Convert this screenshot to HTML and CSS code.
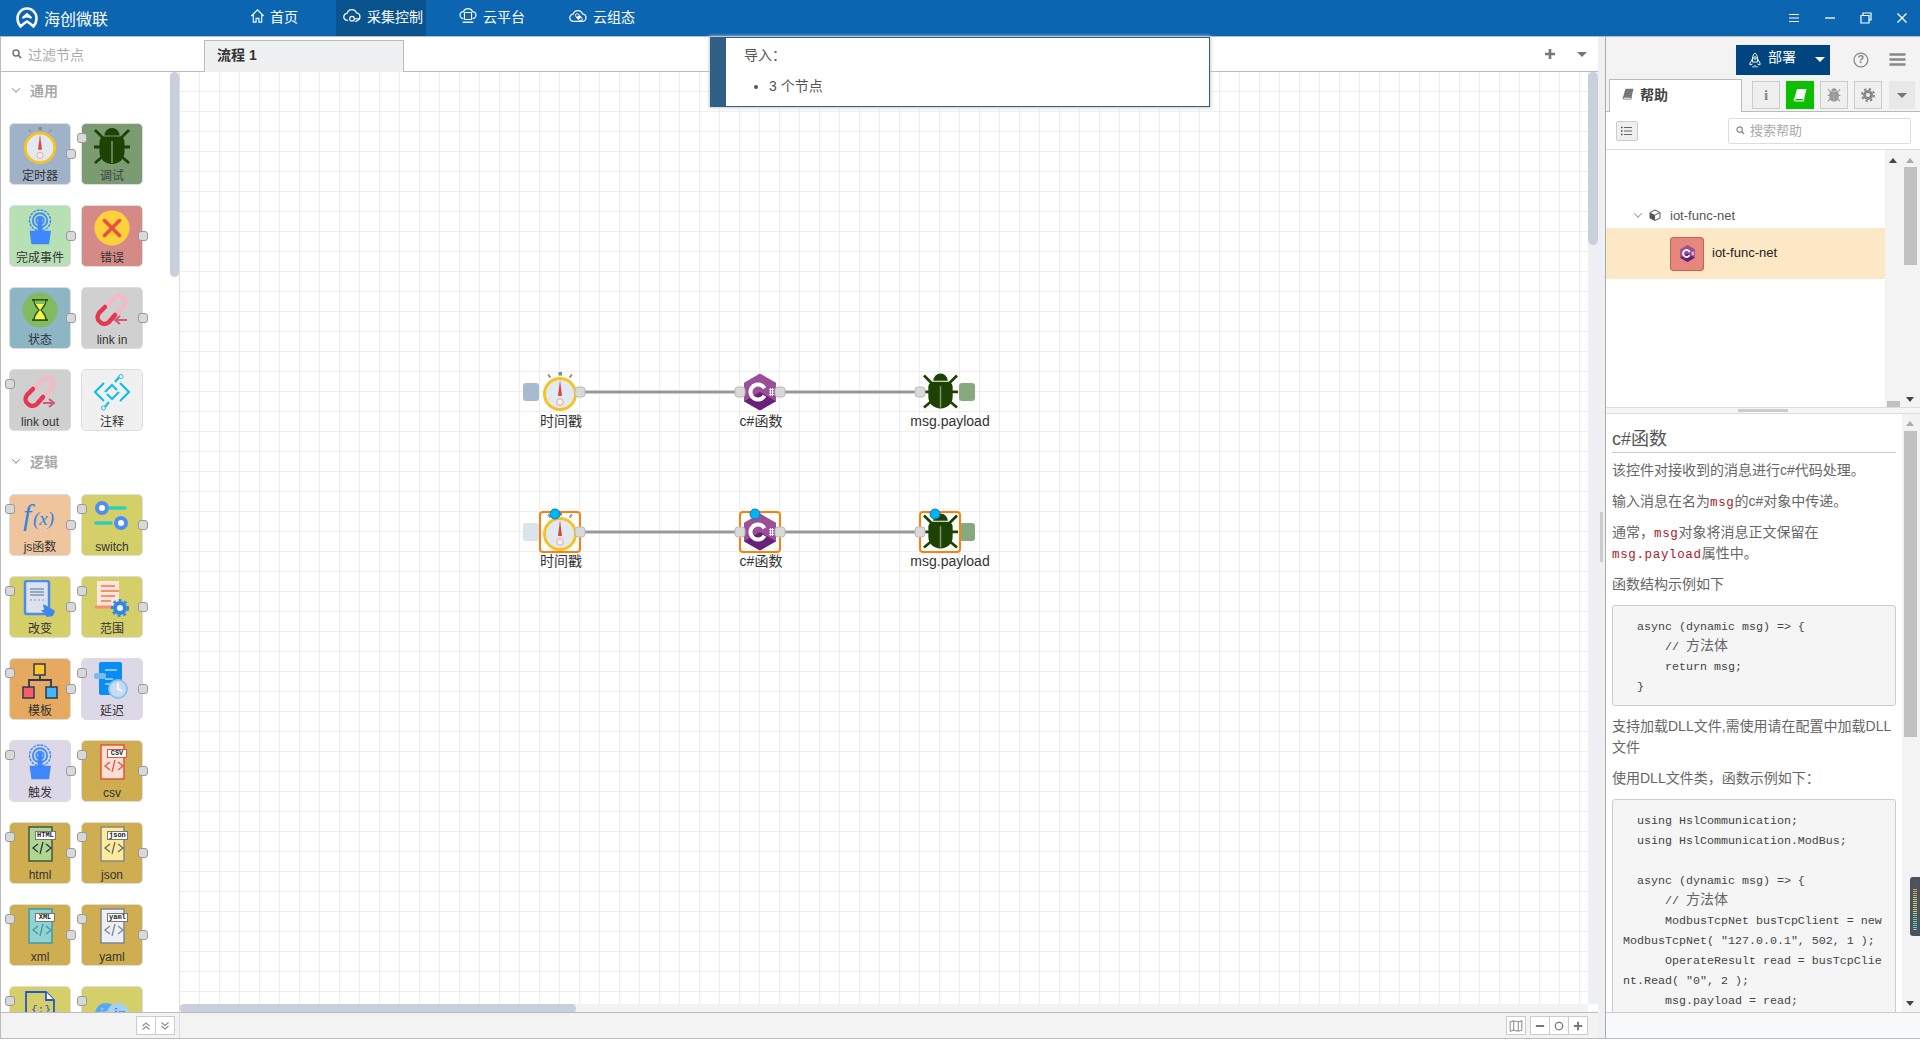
FILE: index.html
```html
<!DOCTYPE html>
<html lang="zh-CN">
<head>
<meta charset="utf-8">
<title>海创微联</title>
<link rel="stylesheet" href="styles.css">
</head>
<body>
<svg class="sprite" xmlns="http://www.w3.org/2000/svg">
  <symbol id="i-clock" viewBox="0 0 36 40">
    <rect x="16.5" y="0" width="3.5" height="3.5" fill="#888"/>
    <path d="M6 2.500l2.500 3M30 2.500l-2.500 3" stroke="#999" stroke-width="2"/>
    <circle cx="18" cy="22" r="15.500" fill="#e3e9f0" stroke="#f5c326" stroke-width="3"/>
    <path d="M18 8l2 16h-4z" fill="#d9433c"/>
    <circle cx="18" cy="30" r="3.300" fill="#f8eeee" stroke="#eea3a3" stroke-width="1"/>
  </symbol>
  <symbol id="i-bug" viewBox="0 0 36 38">
    <path d="M10.500 8.500a7.500 7.500 0 0 1 15 0z" fill="var(--b, #1d4203)"/>
    <path d="M5.500 15c0-3.500 2.500-5.500 5.500-5.500h14c3 0 5.500 2 5.500 5.500v10c0 7-5.500 12-12.500 12S5.500 32 5.500 25z" fill="var(--b, #1d4203)"/>
    <path d="M1 3l8 8M35 3l-8 8M0 20h8M36 20h-8M1 36l7-6M35 36l-7-6" stroke="var(--b, #1d4203)" stroke-width="2.800" fill="none"/>
    <path d="M18 14v22" stroke="#fff" stroke-opacity=".45" stroke-width="1.500"/>
  </symbol>
  <symbol id="i-touch" viewBox="0 0 36 40">
    <circle cx="18" cy="12" r="11" fill="none" stroke="#3f8cf2" stroke-width="1.500" stroke-dasharray="3 1"/>
    <circle cx="18" cy="12" r="7.500" fill="none" stroke="#3f8cf2" stroke-width="2"/>
    <circle cx="18" cy="12" r="4" fill="none" stroke="#3f8cf2" stroke-width="2"/>
    <path d="M15.500 11a2.500 2.500 0 0 1 5 0v12h9l-2 14H9L7 23h8.500z" fill="#3f86fb"/>
  </symbol>
  <symbol id="i-error" viewBox="0 0 36 38">
    <circle cx="18" cy="19" r="17.500" fill="#fdd13c"/>
    <path d="M10.500 11.500l15 15M25.500 11.500l-15 15" stroke="#f04b3e" stroke-width="3.500" stroke-linecap="round"/>
  </symbol>
  <symbol id="i-status" viewBox="0 0 36 36">
    <circle cx="18" cy="18" r="17.500" fill="#82bb5d"/>
    <path d="M10 8h16M10 28h16" stroke="#2d5a22" stroke-width="2"/>
    <path d="M12 8c0 6 4 8 5 10-1 2-5 4-5 10h12c0-6-4-8-5-10 1-2 5-4 5-10z" fill="#f7f74a" stroke="#2d5a22" stroke-width="1.500"/>
    <path d="M12.500 9h11l-1 3H13.500z" fill="#82bb5d"/>
  </symbol>
  <symbol id="i-linkin" viewBox="0 0 36 36">
    <path d="M14 13l6-7c3-3 8-3 10 0 2 2 2 6 0 8l-6 6" fill="none" stroke="#f6b9c4" stroke-width="4.500" stroke-linecap="round"/>
    <path d="M11 15l-6 6c-2 3-2 7 1 9 3 3 7 2 9 0l6-7" fill="none" stroke="#e63752" stroke-width="4.500" stroke-linecap="round"/>
    <path d="M22 28h11M26 24l-5 4 5 4" fill="none" stroke="#cc5a78" stroke-width="2"/>
  </symbol>
  <symbol id="i-linkout" viewBox="0 0 36 36">
    <path d="M14 13l6-7c3-3 8-3 10 0 2 2 2 6 0 8l-6 6" fill="none" stroke="#f6b9c4" stroke-width="4.500" stroke-linecap="round"/>
    <path d="M11 15l-6 6c-2 3-2 7 1 9 3 3 7 2 9 0l6-7" fill="none" stroke="#e63752" stroke-width="4.500" stroke-linecap="round"/>
    <path d="M21 29h10M27 25l5 4-5 4" fill="none" stroke="#cc5a78" stroke-width="2"/>
  </symbol>
  <symbol id="i-comment" viewBox="0 0 36 36">
    <path d="M10 9l-9 9 9 9M26 9l9 9-9 9M11 18l7-7 5 5M25 18l-7 7-5-5M21 8l5-6M15 28l-5 6" fill="none" stroke="#13bfe0" stroke-width="2.200"/>
    <circle cx="27" cy="2.500" r="2" fill="#fff" stroke="#13bfe0"/><circle cx="9.500" cy="34" r="2" fill="#fff" stroke="#13bfe0"/>
  </symbol>
  <symbol id="i-switch" viewBox="0 0 36 36">
    <circle cx="8" cy="9" r="5" fill="#fff" stroke="#4d8ff2" stroke-width="4"/>
    <path d="M16 9h15M2 24h15" stroke="#2fcfb5" stroke-width="3.500" stroke-linecap="round"/>
    <circle cx="27" cy="24" r="5" fill="#fff" stroke="#4d8ff2" stroke-width="4"/>
  </symbol>
  <symbol id="i-change" viewBox="0 0 36 38">
    <rect x="3" y="1" width="24" height="33" rx="2" fill="#dce3ec" stroke="#4d8bf0" stroke-width="2.500"/>
    <path d="M8 9h14M8 12h14M8 15h14" stroke="#7d96b5" stroke-width="1.500"/>
    <path d="M8 20h14" stroke="#7d96b5" stroke-dasharray="2 2"/>
    <path d="M21 24l6 3 6 4-2 5-6 1-6-7 3 0z" fill="#3f86f0"/>
  </symbol>
  <symbol id="i-range" viewBox="0 0 36 38">
    <path d="M3 1h22v26H3z" fill="#fde6da"/>
    <path d="M7 6h14M7 11h18M7 16h14M7 21h10" stroke="#f88f70" stroke-width="2"/>
    <path d="M1 27h20" stroke="#f88f70" stroke-width="3"/>
    <circle cx="26" cy="28" r="5" fill="#fff" stroke="#2f87e8" stroke-width="4"/>
    <circle cx="26" cy="28" r="8" fill="none" stroke="#2f87e8" stroke-width="2" stroke-dasharray="3 3"/>
  </symbol>
  <symbol id="i-template" viewBox="0 0 36 36">
    <rect x="12" y="1" width="11" height="11" fill="#fcc72c" stroke="#2d3a55" stroke-width="1.500"/>
    <path d="M18 12v5M7 24v-7h22v7" fill="none" stroke="#2d3a55" stroke-width="1.800"/>
    <rect x="1" y="24" width="11" height="11" fill="#fb5d68" stroke="#2d3a55" stroke-width="1.500"/>
    <rect x="24" y="24" width="11" height="11" fill="#42b5fb" stroke="#2d3a55" stroke-width="1.500"/>
  </symbol>
  <symbol id="i-delay" viewBox="0 0 36 38">
    <rect x="5" y="0" width="23" height="33" rx="2" fill="#0a8cf5"/>
    <path d="M11 8h12M11 17h8M11 22h5" stroke="#fff" stroke-width="1"/>
    <rect x="0" y="11" width="12" height="6" rx="2" fill="#79b9f2"/>
    <circle cx="24" cy="27" r="9" fill="#c5dcf3" stroke="#8ec0ec" stroke-width="2"/>
    <path d="M24 21v6l4 2" fill="none" stroke="#fff" stroke-width="1.500"/>
  </symbol>
  <symbol id="i-file" viewBox="0 0 30 36">
    <path d="M2 1h23v34H2z" fill="var(--f)" stroke="var(--s)" stroke-width="1.500"/>
    <path d="M11 18l-5 4 5 4M19 18l5 4-5 4M16 16l-3 12" fill="none" stroke="var(--c)" stroke-width="1.300"/>
  </symbol>
  <symbol id="i-csharp" viewBox="0 0 32 37">
    <path d="M16 0l16 9.250v18.500L16 37 0 27.750V9.250z" fill="#9b4f96"/>
    <path d="M0 27.750L16 18.500l16 9.250L16 37z" fill="#68217a"/>
    <circle cx="14" cy="18.500" r="7.500" fill="none" stroke="#fff" stroke-width="4" stroke-dasharray="39 8.100" transform="rotate(30 14 18.500)"/>
    <path d="M25 16h5M25 18.500h5M25 21h5M26.500 14.500v8M28.500 14.500v8" stroke="#fff" stroke-width=".9"/>
  </symbol>
  <symbol id="i-cloud" viewBox="0 0 20 18">
    <path d="M5 14a4 4 0 0 1-.5-8A5.500 5.500 0 0 1 15 5.500 4.300 4.300 0 0 1 15.500 14" fill="none" stroke="#fff" stroke-width="1.400" stroke-linecap="round"/>
    <circle cx="10" cy="12" r="2.600" fill="none" stroke="#fff" stroke-width="1.200"/>
    <path d="M13 12h5M13 15h3" stroke="#fff" stroke-width="1.200"/>
  </symbol>
  <symbol id="i-book" viewBox="0 0 14 14">
    <path d="M4 1h9.500l-2.500 10H3L1.500 12.500 1 11.500z" fill="currentColor"/>
    <path d="M1 12c0-1.500 1-1.500 2-1.500h8L10.500 13H3c-1 0-2-.200-2-1z" fill="none" stroke="currentColor"/>
  </symbol>
</svg>

<div class="app">
  <header class="top">
    <div class="brand">
      <svg class="logo" viewBox="0 0 22 22"><path d="M11 1.500a9.500 9.500 0 0 1 9.500 9.500c0 3-1.300 6.500-3 8.500l-3.500-3-3-2-3 2-3.500 3c-1.700-2-3-5.500-3-8.500A9.500 9.500 0 0 1 11 1.500z" fill="none" stroke="#fff" stroke-width="2.500"/><path d="M6.500 11L11 7l4.500 4-4.500-1.500z" fill="none" stroke="#fff" stroke-width="1.800"/></svg>
      <span>海创微联</span>
    </div>
    <nav class="nav">
      <a class="nav-item nav-home"><svg class="nav-ic" viewBox="0 0 16 16"><path d="M1.500 8L8 1.500 14.500 8M3.500 7v7.500h3v-4h3v4h3V7" fill="none" stroke="#fff" stroke-width="1.200"/></svg>首页</a>
      <a class="nav-item nav-active"><svg class="nav-ic-w"><use href="#i-cloud"/></svg>采集控制</a>
      <a class="nav-item nav-cloud"><svg class="nav-ic-w" viewBox="0 0 20 18"><path d="M5 12a4 4 0 0 1 0-8 5.500 5.500 0 0 1 10 0 4 4 0 0 1 0 8" fill="none" stroke="#fff" stroke-width="1.400"/><rect x="6" y="5" width="8" height="8" rx="1" fill="none" stroke="#fff" stroke-width="1.200"/><path d="M4 16h12" stroke="#fff" stroke-width="1.500"/></svg>云平台</a>
      <a class="nav-item nav-scada"><svg class="nav-ic-w" viewBox="0 0 20 18"><path d="M5 15a4 4 0 0 1-.5-8A5.500 5.500 0 0 1 15 6.500 4.300 4.300 0 0 1 15.500 15z" fill="none" stroke="#fff" stroke-width="1.400"/><circle cx="11" cy="10.500" r="2" fill="#fff"/><ellipse cx="11" cy="10.500" rx="5" ry="2.200" fill="none" stroke="#fff" transform="rotate(50 11 10.500)"/></svg>云组态</a>
    </nav>
    <div class="winctl">
      <svg class="win" viewBox="0 0 12 12"><path d="M1 2.500h10M1 6h10M1 9.500h10" stroke="#fff" stroke-width="1.100"/></svg>
      <svg class="win" viewBox="0 0 12 12"><path d="M1 6h10" stroke="#fff" stroke-width="1.300"/></svg>
      <svg class="win" viewBox="0 0 12 12"><path d="M1 3.500h8v7.500H1zM3 3.500V1h8v7H9" fill="none" stroke="#fff" stroke-width="1.200"/></svg>
      <svg class="win" viewBox="0 0 12 12"><path d="M1.500 1.500l9 9M10.500 1.500l-9 9" stroke="#fff" stroke-width="1.300"/></svg>
    </div>
  </header>

  <main class="work">
    <aside class="palette">
      <div class="filter">
        <svg class="mag mag-f" viewBox="0 0 10 10"><circle cx="4" cy="4" r="3" fill="none" stroke="#777" stroke-width="1.500"/><path d="M6.200 6.200L9 9" stroke="#777" stroke-width="1.800"/></svg>
        <span>过滤节点</span>
      </div>
      <div class="plist">
        <div class="pthumb"></div>
        <div class="psec"><span class="chev"></span>通用</div>
        <div class="pgrid pgrid-first">
          <div class="pn c-timer"><svg class="pi"><use href="#i-clock"/></svg><b>定时器</b><i class="po"></i></div>
          <div class="pn c-debug"><i class="pin"></i><svg class="pi"><use href="#i-bug"/></svg><b>调试</b></div>
          <div class="pn c-done"><svg class="pi"><use href="#i-touch"/></svg><b>完成事件</b><i class="po"></i></div>
          <div class="pn c-error"><svg class="pi"><use href="#i-error"/></svg><b>错误</b><i class="po"></i></div>
          <div class="pn c-status"><svg class="pi"><use href="#i-status"/></svg><b>状态</b><i class="po"></i></div>
          <div class="pn c-link"><svg class="pi"><use href="#i-linkin"/></svg><b>link in</b><i class="po"></i></div>
          <div class="pn c-link"><i class="pin"></i><svg class="pi"><use href="#i-linkout"/></svg><b>link out</b></div>
          <div class="pn c-note"><svg class="pi"><use href="#i-comment"/></svg><b>注释</b></div>
        </div>
        <div class="psec psec-2"><span class="chev"></span>逻辑</div>
        <div class="pgrid pgrid-second">
          <div class="pn c-js"><i class="pin"></i><svg class="pi" viewBox="0 0 36 36"><text x="1" y="26" class="fx-a">f</text><text x="11" y="26" class="fx-b">(x)</text></svg><b>js函数</b><i class="po"></i></div>
          <div class="pn c-olive"><i class="pin"></i><svg class="pi"><use href="#i-switch"/></svg><b>switch</b><i class="po"></i></div>
          <div class="pn c-olive"><i class="pin"></i><svg class="pi"><use href="#i-change"/></svg><b>改变</b><i class="po"></i></div>
          <div class="pn c-olive"><i class="pin"></i><svg class="pi"><use href="#i-range"/></svg><b>范围</b><i class="po"></i></div>
          <div class="pn c-orange"><i class="pin"></i><svg class="pi"><use href="#i-template"/></svg><b>模板</b><i class="po"></i></div>
          <div class="pn c-lilac"><i class="pin"></i><svg class="pi"><use href="#i-delay"/></svg><b>延迟</b><i class="po"></i></div>
          <div class="pn c-lilac"><i class="pin"></i><svg class="pi"><use href="#i-touch"/></svg><b>触发</b><i class="po"></i></div>
          <div class="pn c-gold"><i class="pin"></i><div class="fi f-csv"><svg class="fsvg"><use href="#i-file"/></svg><em>CSV</em></div><b>csv</b><i class="po"></i></div>
          <div class="pn c-gold"><i class="pin"></i><div class="fi f-html"><svg class="fsvg"><use href="#i-file"/></svg><em>HTML</em></div><b>html</b><i class="po"></i></div>
          <div class="pn c-gold"><i class="pin"></i><div class="fi f-json"><svg class="fsvg"><use href="#i-file"/></svg><em>json</em></div><b>json</b><i class="po"></i></div>
          <div class="pn c-gold"><i class="pin"></i><div class="fi f-xml"><svg class="fsvg"><use href="#i-file"/></svg><em>XML</em></div><b>xml</b><i class="po"></i></div>
          <div class="pn c-gold"><i class="pin"></i><div class="fi f-yaml"><svg class="fsvg"><use href="#i-file"/></svg><em>yaml</em></div><b>yaml</b><i class="po"></i></div>
          <div class="pn c-olive"><i class="pin"></i><svg class="pi" viewBox="0 0 36 36"><path d="M4 1h20l8 8v28H4z" fill="none" stroke="#2357cf" stroke-width="1.800"/><path d="M24 1v8h8" fill="#fff" stroke="#2357cf" stroke-width="1.800"/><text x="9" y="22" class="fx-c">{;}</text></svg></div>
          <div class="pn c-olive"><i class="pin"></i><svg class="pi pi-low" viewBox="0 0 36 36"><circle cx="12" cy="18" r="11" fill="#5ba8f0"/><circle cx="24" cy="18" r="11" fill="#a8d0f5"/><text x="6" y="23" class="fx-d">in</text><text x="20" y="23" class="fx-e">in</text></svg></div>
        </div>
      </div>
      <div class="pfoot">
        <span class="fbtn"><svg viewBox="0 0 10 10"><path d="M1.500 5L5 2l3.500 3M1.500 8.500L5 5.500l3.500 3" fill="none" stroke="#8a8f98" stroke-width="1.200"/></svg></span><span class="fbtn"><svg viewBox="0 0 10 10"><path d="M1.500 1.500L5 4.500l3.500-3M1.500 5L5 8l3.500-3" fill="none" stroke="#8a8f98" stroke-width="1.200"/></svg></span>
      </div>
    </aside>

    <section class="center">
      <div class="tabs">
        <div class="tab">流程 1</div>
        <div class="tabs-ctl">
          <svg class="plus" viewBox="0 0 12 12"><path d="M6 1v10M1 6h10" stroke="#777" stroke-width="2.600"/></svg>
          <span class="caret caret-g"></span>
        </div>
      </div>
      <div class="canvas">
        <div class="ws">
          <svg class="flow" viewBox="180 72 1408 932" xmlns="http://www.w3.org/2000/svg">
            <path class="wire" d="M580 392H740M780 392H920M580 532H740M780 532H920"/>
            <rect x="523" y="383" width="16" height="18" rx="3" fill="#a6bbcf"/>
            <rect x="523" y="523" width="16" height="18" rx="3" fill="#dbe4ec"/>
            <rect x="959" y="383" width="16" height="18" rx="3" fill="#87a980"/>
            <rect x="959" y="523" width="16" height="18" rx="3" fill="#87a980"/>
            <use href="#i-clock" x="542" y="372" width="36" height="40"/>
            <use href="#i-clock" x="542" y="512" width="36" height="40"/>
            <use href="#i-csharp" x="744" y="373.500" width="32" height="37"/>
            <use href="#i-csharp" x="744" y="513.500" width="32" height="37"/>
            <use href="#i-bug" x="923" y="372" width="35" height="38"/>
            <use href="#i-bug" x="923" y="512" width="35" height="38"/>
            <rect class="sel" x="540" y="512" width="40" height="40" rx="3"/>
            <rect class="sel" x="740" y="512" width="40" height="40" rx="3"/>
            <rect class="sel" x="920" y="512" width="40" height="40" rx="3"/>
            <rect class="port" x="575" y="387" width="10" height="10" rx="3"/>
            <rect class="port" x="735" y="387" width="10" height="10" rx="3"/>
            <rect class="port" x="775" y="387" width="10" height="10" rx="3"/>
            <rect class="port" x="915" y="387" width="10" height="10" rx="3"/>
            <rect class="port" x="575" y="527" width="10" height="10" rx="3"/>
            <rect class="port" x="735" y="527" width="10" height="10" rx="3"/>
            <rect class="port" x="775" y="527" width="10" height="10" rx="3"/>
            <rect class="port" x="915" y="527" width="10" height="10" rx="3"/>
            <circle class="dot" cx="555" cy="514" r="5"/>
            <circle class="dot" cx="755" cy="514" r="5"/>
            <circle class="dot" cx="935" cy="514" r="5"/>
            <text class="nl" x="561" y="426">时间戳</text>
            <text class="nl" x="761" y="426">c#函数</text>
            <text class="nl" x="950" y="426">msg.payload</text>
            <text class="nl" x="561" y="566">时间戳</text>
            <text class="nl" x="761" y="566">c#函数</text>
            <text class="nl" x="950" y="566">msg.payload</text>
          </svg>
        </div>
        <div class="vtrack"><div class="vthumb"></div></div>
        <div class="htrack"><div class="hthumb"></div></div>
        <div class="corner"></div>
      </div>
      <div class="cfoot">
        <span class="fbtn cf-map"><svg viewBox="0 0 12 12"><path d="M1 2.500l3-1 4 1 3-1v8l-3 1-4-1-3 1zM4 1.500v8M8 2.500v8" fill="none" stroke="#999" stroke-width="1"/></svg></span>
        <span class="cf-group">
          <span class="fbtn"><svg viewBox="0 0 12 12"><path d="M1 6h10" stroke="#777" stroke-width="2.400"/></svg></span><span class="fbtn"><svg viewBox="0 0 12 12"><circle cx="6" cy="6" r="4.500" fill="none" stroke="#777" stroke-width="1.500"/></svg></span><span class="fbtn"><svg viewBox="0 0 12 12"><path d="M6 1v10M1 6h10" stroke="#777" stroke-width="2.400"/></svg></span>
        </span>
      </div>
    </section>

    <div class="sep"><div class="sep-handle"></div></div>

    <aside class="side">
      <div class="deploybar">
        <div class="deploy">
          <svg class="rocket" viewBox="0 0 16 16"><path d="M8 1c2.500 2 3 5 2.500 9h-5C5 6 5.500 3 8 1zM5.500 7L3 11v2l2.500-1M10.500 7L13 11v2l-2.500-1M6 14v1.500M8 13v2.500M10 14v1.500" fill="none" stroke="#fff" stroke-width="1"/><circle cx="8" cy="6" r="1.300" fill="none" stroke="#fff"/></svg>
          <span class="deploy-t">部署</span>
          <span class="caret caret-w"></span>
        </div>
        <svg class="help" viewBox="0 0 16 16"><circle cx="8" cy="8" r="7" fill="none" stroke="#888" stroke-width="1.300"/><text x="8" y="11.500" class="qm">?</text></svg>
        <svg class="ham" viewBox="0 0 16 13"><path d="M0 1.500h16M0 6.500h16M0 11.500h16" stroke="#888" stroke-width="2.400"/></svg>
      </div>
      <div class="sidetabs">
        <div class="stab"><svg class="bk"><use href="#i-book"/></svg>帮助</div>
        <div class="sbtns">
          <span class="sb sb-i">i</span>
          <span class="sb sb-on"><svg class="bk"><use href="#i-book"/></svg></span>
          <span class="sb"><svg class="sb-ic sb-bug" viewBox="0 0 36 38"><use href="#i-bug"/></svg></span>
          <span class="sb"><svg class="sb-ic" viewBox="0 0 14 14"><circle cx="7" cy="7" r="3.500" fill="none" stroke="#888" stroke-width="3"/><circle cx="7" cy="7" r="6" fill="none" stroke="#888" stroke-width="2" stroke-dasharray="2.400 2.300"/></svg></span>
          <span class="sb sb-plain"><span class="caret caret-g"></span></span>
        </div>
      </div>
      <div class="stool">
        <span class="listbtn"><svg viewBox="0 0 12 10"><path d="M3 1.500h8M3 5h8M3 8.500h8" stroke="#666" stroke-width="1"/><path d="M0 1.500h1.500M0 5h1.500M0 8.500h1.500" stroke="#444" stroke-width="1.400"/></svg></span>
        <div class="hsearch">
          <svg class="mag" viewBox="0 0 10 10"><circle cx="4" cy="4" r="3" fill="none" stroke="#888" stroke-width="1.300"/><path d="M6.200 6.200L9 9" stroke="#888" stroke-width="1.600"/></svg>
          <span class="hsearch-t">搜索帮助</span>
        </div>
      </div>
      <div class="tree">
        <div class="tree-body">
          <div class="t-mod"><span class="chev chev-d"></span><svg class="cube" viewBox="0 0 12 12"><path d="M6 1l5 2.500v5.500L6 11.500 1 9V3.500z" fill="#fff" stroke="#555"/><path d="M1 3.500L6 6v5.500L1 9z" fill="#555"/><path d="M6 6l5-2.500" stroke="#555"/></svg>iot-func-net</div>
          <div class="t-node"><span class="t-ic"><svg class="t-cs"><use href="#i-csharp"/></svg></span><span class="t-label">iot-func-net</span></div>
        </div>
        <div class="tree-scroll">
          <span class="tri tri-up tri-d tri-a"></span><span class="tri tri-up tri-b"></span>
          <div class="ts-thumb"></div>
          <span class="tri tri-dn tri-d tri-c"></span>
          <div class="ts-thumb2"></div>
        </div>
      </div>
      <div class="divider"><div class="div-handle"></div></div>
      <div class="help-wrap">
        <article class="doc">
          <h3>c#函数</h3>
          <p>该控件对接收到的消息进行c#代码处理。</p>
          <p>输入消息在名为<code>msg</code>的c#对象中传递。</p>
          <p>通常，<code>msg</code>对象将消息正文保留在<br><code>msg.payload</code>属性中。</p>
          <p>函数结构示例如下</p>
          <pre class="pre-a"><span class="ln">  async (dynamic msg) =&gt; {</span><span class="ln"><span>      // </span><span class="cj">方法体</span></span><span class="ln">      return msg;</span><span class="ln">  }</span></pre>
          <p>支持加载DLL文件,需使用请在配置中加载DLL<br>文件</p>
          <p>使用DLL文件类，函数示例如下：</p>
          <pre class="pre-b"><span class="ln">  using HslCommunication;</span><span class="ln">  using HslCommunication.ModBus;</span><span class="ln"></span><span class="ln">  async (dynamic msg) =&gt; {</span><span class="ln"><span>      // </span><span class="cj">方法体</span></span><span class="ln">      ModbusTcpNet busTcpClient = new</span><span class="ln">ModbusTcpNet( "127.0.0.1", 502, 1 );</span><span class="ln">      OperateResult read = busTcpClie</span><span class="ln">nt.Read( "0", 2 );</span><span class="ln">      msg.payload = read;</span></pre>
        </article>
        <div class="doc-scroll">
          <span class="tri tri-up tri-b"></span>
          <div class="ds-thumb"></div>
          <span class="tri tri-dn tri-d"></span>
        </div>
        <div class="meter"><span></span></div>
      </div>
      <div class="sfoot"></div>
    </aside>
  </main>

  <div class="notify">
    <div class="notify-bar"></div>
    <div class="notify-body">
      <div class="notify-t">导入：</div>
      <ul><li>3 个节点</li></ul>
    </div>
  </div>
</div>
</body>
</html>
```

FILE: styles.css
```css
* { box-sizing: border-box; }
html, body { margin: 0; padding: 0; width: 1920px; height: 1040px; overflow: hidden; }
body { font-family: "Liberation Sans", "Noto Sans CJK SC", sans-serif; font-size: 14px; color: #555; background: #fff; }
.sprite { position: absolute; width: 0; height: 0; }
.app { position: relative; width: 1920px; height: 1040px; display: flex; flex-direction: column; }

/* header */
.top { height: 37px; flex: none; background: #0b65b0; border-bottom: 1px solid #bbb; display: flex; align-items: stretch; color: #fff; }
.brand { width: 250px; display: flex; align-items: center; gap: 6px; padding-left: 16px; font-size: 16px; flex: none; }
.logo { width: 22px; height: 22px; }
.nav { display: flex; flex: 1; }
.nav-item { display: flex; align-items: center; gap: 6px; height: 36px; padding-bottom: 4px; font-size: 14px; color: #fff; }
.nav-home { width: 86px; gap: 5px; }
.nav-active { width: 90px; background: #09538f; padding-left: 7px; }
.nav-cloud { margin-left: 33px; width: 110px; gap: 6px; }
.nav-scada { gap: 6px; }
.nav-ic { width: 15px; height: 16px; }
.nav-ic-w { width: 18px; height: 16px; }
.winctl { display: flex; gap: 24px; padding-right: 12px; align-items: center; }
.win { width: 12px; height: 12px; }

/* main */
.work { flex: none; height: 1002px; display: flex; border-bottom: 1px solid #bbb; border-left: 1px solid #bbb; }
.palette { width: 179px; flex: none; display: flex; flex-direction: column; }
.filter { height: 35px; flex: none; border-bottom: 1px solid #bbb; display: flex; align-items: center; gap: 6px; padding-left: 11px; color: #aaa; font-size: 14px; background: #fff; }
.mag { width: 9px; height: 9px; flex: none; }
.mag-f { width: 10px; height: 10px; }
.plist { flex: 1; position: relative; overflow: hidden; min-height: 0; border-right: 1px solid #ddd; }
.pthumb { position: absolute; right: 0; top: 0; width: 9px; height: 205px; border-radius: 5px; background: #c9cfdd; }
.psec { height: 36px; display: flex; align-items: center; gap: 11px; padding-left: 12px; color: #aaa; font-size: 14px; font-weight: 700; }
.psec-2 { margin-top: 20px; height: 20px; }
.chev { width: 6px; height: 6px; border-right: 1px solid #999; border-bottom: 1px solid #999; transform: rotate(45deg) translate(-1px, -1px); flex: none; }
.pgrid { display: grid; grid-template-columns: 62px 62px; grid-auto-rows: 62px; column-gap: 10px; row-gap: 20px; padding-left: 8px; }
.pgrid-first { margin-top: 15px; }
.pgrid-second { margin-top: 23px; }
.pn { position: relative; display: flex; flex-direction: column; align-items: center; border: 1px solid #ddd; border-radius: 5px; padding-top: 3px; }
.pn b { font-weight: 400; font-size: 12px; line-height: 16px; color: #333; position: absolute; top: 44px; left: 0; right: 0; text-align: center; white-space: nowrap; }
.pi { width: 36px; height: 38px; flex: none; }
.pi-low { margin-top: 5px; }
.pin, .po { position: absolute; width: 10px; height: 10px; border: 1px solid #999; border-radius: 3px; background: #d9d9d9; }
.pin { left: -5px; top: 9px; }
.po { right: -6px; top: 25px; }
.c-timer { background: #a0b2c8; }
.c-debug { background: #7b9b73; }
.c-debug b { color: #444; }
.c-done { background: #b8e0b5; }
.c-error { background: #d68a87; }
.c-status { background: #8db6c5; }
.c-link { background: #d0d0d0; }
.c-note { background: #f0f0f0; }
.c-js { background: #eec59c; }
.c-olive { background: #d5cf6a; }
.c-orange { background: #e5aa60; }
.c-lilac { background: #dcd8e8; }
.c-gold { background: #cfae52; }
.fx-a { font-family: "Liberation Serif", serif; font-style: italic; font-size: 30px; fill: #2f85e8; }
.fx-b { font-family: "Liberation Serif", serif; font-style: italic; font-size: 19px; fill: #2f85e8; }
.fx-c { font-family: "Liberation Mono", monospace; font-size: 11px; fill: #2357cf; }
.fx-d { font-size: 14px; font-weight: 700; fill: #a8d0f5; }
.fx-e { font-size: 14px; font-weight: 700; fill: #3f86f0; }
.fi { position: relative; width: 36px; height: 36px; flex: none; --f: #fff; --s: #444; --c: #444; }
.fsvg { position: absolute; left: 5px; top: 0; width: 30px; height: 36px; }
.fi em { position: absolute; left: 13px; top: 5px; height: 9px; min-width: 20px; padding: 0 1px; background: #fff; border: 1px solid #777; font: 700 7px/7px "Liberation Mono", monospace; color: #222; text-align: center; }
.f-csv { --f: #fde0d5; --s: #e2543a; --c: #e2543a; }
.f-csv em { border-color: #e2543a; }
.f-html { --f: #afd690; --s: #445544; --c: #334; }
.f-json { --f: #fdeb9c; --s: #888; --c: #666; }
.f-xml { --f: #93d2d3; --s: #3e9aa5; --c: #3e9aa5; }
.f-yaml { --f: #edf1f7; --s: #7d8796; --c: #7d8796; }
.pfoot, .cfoot { height: 26px; flex: none; border-top: 1px solid #bbb; background: #f3f3f3; display: flex; align-items: center; }
.pfoot { padding-left: 136px; border-right: 1px solid #ddd; }
.fbtn { width: 20px; height: 19px; border: 1px solid #ccc; background: #fff; display: inline-flex; align-items: center; justify-content: center; margin-left: -1px; }
.fbtn svg { width: 10px; height: 10px; }
.cfoot { justify-content: flex-end; padding-right: 10px; gap: 5px; }
.cf-map svg { width: 14px; height: 14px; }
.cf-group { display: inline-flex; }

/* center */
.center { width: 1418px; flex: none; display: flex; flex-direction: column; }
.tabs { height: 35px; flex: none; border-bottom: 1px solid #bbb; display: flex; align-items: flex-end; padding-left: 24px; background: #fff; }
.tab { width: 200px; height: 32px; background: #eff0f2; border: 1px solid #bbb; border-bottom: 0; padding-left: 12px; font-size: 14px; line-height: 28px; color: #333; font-weight: 700; margin-bottom: -1px; }
.tabs-ctl { margin-left: auto; height: 34px; display: flex; align-items: center; gap: 21px; padding-right: 11px; }
.plus { width: 12px; height: 12px; }
.caret { display: inline-block; width: 0; height: 0; border-left: 5px solid transparent; border-right: 5px solid transparent; }
.caret-g { border-top: 5px solid #777; }
.caret-w { border-top: 5px solid #fff; }
.canvas { flex: 1; min-height: 0; display: grid; grid-template-columns: 1408px 10px; grid-template-rows: 932px 9px; }
.ws { position: relative; overflow: hidden; background-color: #fff; background-image: linear-gradient(to right, transparent 19px, #eee 19px), linear-gradient(to bottom, transparent 19px, #eee 19px); background-size: 20px 20px; }
.flow { position: absolute; inset: 0; width: 1408px; height: 932px; }
.wire { fill: none; stroke: #999; stroke-width: 3; }
.sel { fill: none; stroke: #ff7f0e; stroke-width: 2; }
.port { fill: #d9d9d9; stroke: #bbb; stroke-width: 1; }
.dot { fill: #00b4f5; stroke: #0c7ca8; stroke-width: 1; }
.nl { font-size: 14px; fill: #333; text-anchor: middle; }
.vtrack { background: #eff0f3; position: relative; }
.vthumb { height: 173px; background: #c9cfdd; border-radius: 5px; }
.htrack { background: #f3f3f3; }
.hthumb { width: 396px; height: 9px; background: #c9cfdd; border-radius: 5px; }
.corner { background: #fff; }

.sep { width: 8px; flex: none; background: #eff0f3; border-right: 1px solid #aaa; position: relative; }
.sep-handle { position: absolute; left: 2px; top: 475px; width: 3px; height: 50px; background: #ccc; }

/* right side */
.side { flex: 1; min-width: 0; display: flex; flex-direction: column; background: #fff; }
.deploybar { height: 40px; flex: none; background: #f3f3f3; display: flex; align-items: center; padding: 5px 14px 0 130px; }
.deploy { width: 95px; height: 30px; background: #00457f; color: #fff; display: flex; align-items: center; padding-left: 11px; }
.rocket { width: 16px; height: 18px; }
.deploy-t { margin-left: 5px; font-size: 14px; padding-bottom: 7px; }
.deploy .caret { margin-left: 19px; }
.help { width: 16px; height: 16px; margin-left: 23px; }
.qm { font-size: 11px; fill: #888; text-anchor: middle; font-weight: 700; }
.ham { width: 17px; height: 13px; margin-left: 20px; flex: none; }
.sidetabs { height: 35px; flex: none; background: #f3f3f3; display: flex; align-items: flex-end; padding-left: 3px; border-bottom: 1px solid #bbb; }
.stab { width: 133px; height: 33px; background: #fff; border: 1px solid #bbb; border-bottom: 0; margin-bottom: -1px; display: flex; align-items: center; gap: 6px; padding: 0 0 4px 12px; color: #444; font-size: 14px; font-weight: 700; }
.bk { width: 12px; height: 12px; flex: none; color: #777; }
.sbtns { display: flex; gap: 6px; padding-left: 10px; align-self: flex-start; padding-top: 4px; }
.sb { width: 28px; height: 28px; border: 1px solid #ccc; background: #efefef; display: flex; align-items: center; justify-content: center; }
.sb-i { font: 700 15px "Liberation Serif", serif; color: #888; }
.sb-on { background: #0cc000; border-color: #0cc000; }
.sb-on .bk { color: #fff; width: 14px; height: 14px; }
.sb-ic { width: 14px; height: 14px; }
.sb-bug { --b: #999; }
.sb-plain { border: 0; background: #e8e8e8; width: 26px; margin-left: 1px; }
.stool { height: 38px; flex: none; display: flex; align-items: center; border-bottom: 1px solid #ddd; padding-left: 10px; background: #fff; }
.listbtn { width: 22px; height: 20px; border: 1px solid #ccc; border-radius: 2px; background: #efefef; display: flex; align-items: center; justify-content: center; }
.listbtn svg { width: 12px; height: 10px; }
.hsearch { width: 183px; height: 26px; border: 1px solid #ddd; border-radius: 2px; margin-left: 90px; display: flex; align-items: center; gap: 5px; padding-left: 7px; color: #aaa; font-size: 13px; }
.hsearch-t { padding-bottom: 2px; }
.tree { height: 257px; flex: none; display: flex; }
.tree-body { width: 279px; flex: none; padding-top: 53px; }
.t-mod { height: 25px; display: flex; align-items: center; padding: 0 0 1px 29px; font-size: 13px; color: #555; }
.chev-d { margin-right: 8px; }
.cube { width: 12px; height: 12px; margin-right: 9px; flex: none; }
.t-node { height: 51px; background: #fde8c6; display: flex; align-items: center; padding: 0 0 0 64px; gap: 8px; font-size: 13px; color: #222; }
.t-label { padding-bottom: 3px; }
.t-ic { width: 34px; height: 34px; border-radius: 3px; background: #e7867a; border: 1px solid #c0645a; display: flex; align-items: center; justify-content: center; }
.t-cs { width: 15px; height: 17px; }
.tree-scroll { flex: 1; background: #f3f3f3; position: relative; }
.tri { position: absolute; width: 0; height: 0; border-left: 4px solid transparent; border-right: 4px solid transparent; }
.tri-up { border-bottom: 5px solid #aaa; }
.tri-dn { border-top: 5px solid #aaa; }
.tri-d.tri-up { border-bottom-color: #444; }
.tri-d.tri-dn { border-top-color: #444; }
.tree-scroll .tri-a { left: 4px; top: 8px; }
.tree-scroll .tri-b { left: 21px; top: 8px; }
.tree-scroll .tri-c { left: 21px; top: 247px; }
.ts-thumb { position: absolute; left: 19px; top: 17px; width: 13px; height: 98px; background: #c0c0c0; }
.ts-thumb2 { position: absolute; left: 2px; top: 251px; width: 13px; height: 6px; background: #c0c0c0; }
.divider { height: 7px; flex: none; background: #f6f6f6; border-top: 1px solid #ddd; border-bottom: 1px solid #ddd; position: relative; }
.div-handle { position: absolute; left: 132px; top: 1px; width: 50px; height: 3px; background: #ccc; }
.help-wrap { height: 598px; flex: none; display: flex; position: relative; overflow: hidden; }
.doc { width: 296px; flex: none; padding: 13px 6px 0; overflow: hidden; }
.doc h3 { margin: 0 0 7px; font-size: 18px; font-weight: 400; line-height: 25px; color: #555; border-bottom: 1px solid #ccc; }
.doc p { margin: 0 0 10px; font-size: 14px; line-height: 21px; color: #666; white-space: nowrap; }
.doc code { font-family: "Liberation Mono", monospace; font-size: 12.500px; letter-spacing: .65px; line-height: 0; color: #ad1625; }
.doc pre { margin: 0 0 10px; border: 1px solid #ccc; border-radius: 3px; background: #f5f5f5; padding: 11px 10px 8px; font: 11.670px/20px "Liberation Mono", monospace; color: #444; overflow: hidden; white-space: normal; }
.ln { display: block; white-space: pre; height: 20px; }
.cj { font-family: "Noto Sans CJK SC", sans-serif; font-size: 14px; line-height: 1; color: #666; }
.doc-scroll { flex: 1; background: #f3f3f3; position: relative; }
.doc-scroll .tri-b { left: 4px; top: 7px; }
.doc-scroll .tri-d { left: 4px; top: 587px; }
.ds-thumb { position: absolute; left: 2px; top: 17px; width: 13px; height: 306px; background: #c0c0c0; }
.meter { position: absolute; right: 0; top: 463px; width: 10px; height: 59px; border-radius: 3px 0 0 3px; background: #4a5260; display: flex; justify-content: center; align-items: center; }
.meter span { width: 4px; height: 48px; background: repeating-linear-gradient(to bottom, transparent 0 1px, #4a5260 1px 2px), linear-gradient(to bottom, #555 0 10%, #d9a35f 10% 30%, #d8cf6a 30% 65%, #6ccfa9 65% 100%); }
.sfoot { flex: 1; background: #f8f9fb; border-top: 1px solid #ccc; }

/* notification */
.notify { position: absolute; left: 710px; top: 37px; width: 500px; height: 70px; display: flex; background: #fff; border: 1px solid #2f5f85; box-shadow: 0 0 3px 1px #ccc; }
.notify-bar { width: 15px; background: #2f5f85; flex: none; }
.notify-body { padding: 7px 0 0 18px; font-size: 14px; color: #555; line-height: 20px; }
.notify ul { margin: 11px 0 0; padding-left: 25px; }
```
